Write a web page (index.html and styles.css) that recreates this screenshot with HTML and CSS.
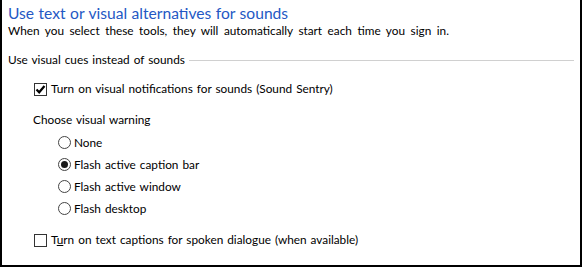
FILE: index.html
```html
<!DOCTYPE html>
<html lang="en">
<head>
    <meta charset="UTF-8">
    <title>Use text or visual alternatives for sounds</title>
    <link rel="stylesheet" href="styles.css">
</head>
<body>
    <div class="panel">
        <h1 class="title">Use text or visual alternatives for sounds</h1>
        <p class="subtitle">When you select these tools, they will automatically start each time you sign in.</p>

        <!-- Visual cues group -->
        <div class="group-header">
            <span>Use visual cues instead of sounds</span>
            <span class="rule"></span>
        </div>

        <label class="check-row first">
            <span class="checkbox checked">
                <svg width="11" height="11" viewBox="0 0 11 11"><path d="M1.5 5.5 L4.2 8.3 L9.5 2" fill="none" stroke="#000" stroke-width="2.2"/></svg>
            </span>
            <span>Turn on visual notifications for sounds (Sound Sentry)</span>
        </label>

        <div class="warning-label">Choose visual warning</div>

        <div class="radios">
            <label class="radio-row"><span class="radio"></span><span>None</span></label>
            <label class="radio-row"><span class="radio selected"></span><span>Flash active caption bar</span></label>
            <label class="radio-row"><span class="radio"></span><span>Flash active window</span></label>
            <label class="radio-row"><span class="radio"></span><span>Flash desktop</span></label>
        </div>

        <label class="check-row last">
            <span class="checkbox"></span>
            <span>T<u>u</u>rn on text captions for spoken dialogue (when available)</span>
        </label>
    </div>
</body>
</html>
```

FILE: styles.css
```css
/* Global styles */
body {
    margin: 0;
    font-family: 'Lato', 'Open Sans', sans-serif;
    font-size: 11.8px;
    word-spacing: 1px;
    color: #000;
    background: #fff;
}

.panel {
    width: 578px;
    height: 265px;
    border-left: 2px solid #000;
    border-right: 2px solid #000;
    border-bottom: 2px solid #000;
    overflow: hidden;
}

.title {
    margin: 0;
    padding: 3px 0 0 6px;
    font-size: 15.6px;
    font-weight: normal;
    word-spacing: 0.5px;
    line-height: 20px;
    color: #2458c4;
}

.subtitle {
    margin: 0;
    padding-left: 6px;
    word-spacing: 2.5px;
    line-height: 15px;
}

/* Group header with the rule */
.group-header {
    display: flex;
    align-items: center;
    margin-top: 14px;
    padding-left: 6px;
    padding-right: 6px;
    line-height: 16px;
}

.group-header .rule {
    flex: 1;
    height: 1px;
    margin-left: 4px;
    background: #d0d0d0;
}

/* Checkboxes */
.check-row {
    display: flex;
    align-items: center;
    padding-left: 32px;
    line-height: 16px;
}

.check-row.first {
    margin-top: 13px;
}

.check-row.last {
    margin-top: 13px;
}

.checkbox {
    box-sizing: border-box;
    width: 13px;
    height: 13px;
    margin-right: 4px;
    border: 1px solid #333;
    background: #fff;
    display: flex;
    align-items: center;
    justify-content: center;
}

.warning-label {
    margin-top: 15px;
    padding-left: 31px;
    line-height: 16px;
}

/* Radio buttons */
.radios {
    margin-top: 3px;
    padding-left: 56px;
}

.radio-row {
    display: flex;
    align-items: center;
    height: 22px;
}

.radio {
    box-sizing: border-box;
    width: 13px;
    height: 13px;
    margin-right: 3px;
    border: 1px solid #444;
    border-radius: 50%;
    background: #fff;
    display: flex;
    align-items: center;
    justify-content: center;
}

.radio.selected::after {
    content: "";
    width: 7px;
    height: 7px;
    border-radius: 50%;
    background: #1a1a1a;
}
```
